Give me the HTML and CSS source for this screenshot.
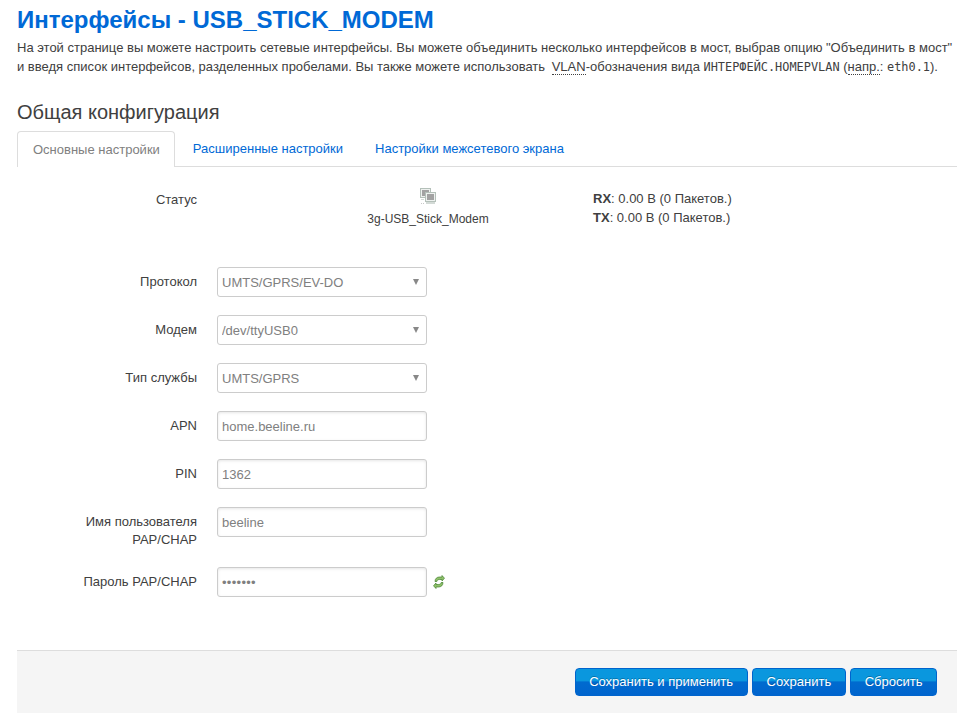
FILE: index.html
```html
<!DOCTYPE html>
<html lang="ru">
<head>
<meta charset="utf-8">
<title>Интерфейсы - USB_STICK_MODEM</title>
<link rel="stylesheet" href="styles.css">
</head>
<body>
<main class="page">
  <h2 class="title">Интерфейсы - USB_STICK_MODEM</h2>
  <p class="intro">На этой странице вы можете настроить сетевые интерфейсы. Вы можете объединить несколько интерфейсов в мост, выбрав опцию "Объединить в мост"<br>и введя список интерфейсов, разделенных пробелами. Вы также можете использовать <abbr class="abbr-vlan">VLAN</abbr>-обозначения вида <code>ИНТЕРФЕЙС.НОМЕРVLAN</code> (<abbr>напр.</abbr>: <code>eth0.1</code>).</p>
  <h3 class="section">Общая конфигурация</h3>
  <nav class="tabs">
    <a class="tab active">Основные настройки</a>
    <a class="tab">Расширенные настройки</a>
    <a class="tab">Настройки межсетевого экрана</a>
  </nav>
  <form class="form">
    <div class="row status-row">
      <div class="label">Статус</div>
      <div class="status-device">
        <svg class="net-icon" width="16" height="17" viewBox="0 0 16 17">
          <rect x="0.5" y="0.5" width="10" height="9" fill="#eef1ef" stroke="#b4c0b9"/>
          <rect x="2" y="2" width="7" height="6" fill="#a2a2a2"/>
          <rect x="5.5" y="4.5" width="10" height="9" fill="#eef1ef" stroke="#b4c0b9"/>
          <rect x="7" y="6" width="7" height="6" fill="#a2a2a2"/>
          <rect x="6" y="14" width="9" height="2" fill="#d3dad6"/>
          <rect x="1" y="11" width="3" height="1" fill="#d3dad6"/>
          <rect x="1" y="15" width="1" height="1" fill="#c8c8c8"/>
          <rect x="3" y="15" width="1" height="1" fill="#c8c8c8"/>
        </svg>
        <span class="device-name">3g-USB_Stick_Modem</span>
      </div>
      <div class="status-stats">
        <div><b>RX</b>: 0.00 B (0 Пакетов.)</div>
        <div><b>TX</b>: 0.00 B (0 Пакетов.)</div>
      </div>
    </div>
    <div class="row">
      <label class="label">Протокол</label>
      <div class="select-wrap"><select class="field"><option>UMTS/GPRS/EV-DO</option></select></div>
    </div>
    <div class="row">
      <label class="label">Модем</label>
      <div class="select-wrap"><select class="field"><option>/dev/ttyUSB0</option></select></div>
    </div>
    <div class="row">
      <label class="label">Тип службы</label>
      <div class="select-wrap"><select class="field"><option>UMTS/GPRS</option></select></div>
    </div>
    <div class="row">
      <label class="label">APN</label>
      <input class="field" type="text" value="home.beeline.ru">
    </div>
    <div class="row">
      <label class="label">PIN</label>
      <input class="field" type="text" value="1362">
    </div>
    <div class="row row-tall">
      <label class="label">Имя пользователя PAP/CHAP</label>
      <input class="field" type="text" value="beeline">
    </div>
    <div class="row">
      <label class="label">Пароль PAP/CHAP</label>
      <input class="field field-secret" type="password" value="1234567">
      <svg class="reveal" width="12" height="14" viewBox="0 0 12 14">
        <path d="M2 6.5C2 3.5 4 2 6.5 2H9V0.5L11.5 3.2 9 6V4.5H6.5C5 4.5 4 5.2 3.8 6.5Z" fill="#8fc06a" stroke="#3f7f2a" stroke-width="0.7"/>
        <path d="M10 7.5C10 10.5 8 12 5.5 12H3V13.5L0.5 10.8 3 8V9.5H5.5C7 9.5 8 8.8 8.2 7.5Z" fill="#8fc06a" stroke="#3f7f2a" stroke-width="0.7"/>
      </svg>
    </div>
    <div class="actions">
      <button class="btn btn-trim" type="button">Сохранить и применить</button>
      <button class="btn" type="button">Сохранить</button>
      <button class="btn btn-trim" type="button">Сбросить</button>
    </div>
  </form>
</main>
</body>
</html>
```
FILE: styles.css
```css
html, body { margin: 0; padding: 0; background: #fff; }
body {
  font-family: "Liberation Sans", Arial, sans-serif;
  font-size: 13px;
  line-height: 18px;
  color: #404040;
  overflow: hidden;
}
.page { width: 940px; margin-left: 17px; }
.title {
  margin: 0;
  padding-top: 5px;
  font-size: 24px;
  line-height: 30px;
  font-weight: bold;
  color: #0069d6;
}
.intro { margin: 3px 0 0; line-height: 19px; white-space: nowrap; }
abbr { border-bottom: 1px dotted #404040; }
.abbr-vlan { margin-left: 3px; }
code { font-family: "DejaVu Sans Mono", monospace; font-size: 11.9px; }
.section {
  margin: 20px 0 0;
  font-size: 20px;
  line-height: 30px;
  font-weight: normal;
}
.tabs {
  display: flex;
  height: 35px;
  margin-top: 4px;
  border-bottom: 1px solid #ddd;
}
.tab {
  padding: 0 15px;
  height: 35px;
  line-height: 35px;
  margin-right: 2px;
  color: #0069d6;
}
.tab.active {
  padding-right: 14px;
  margin-right: 3px;
  color: #808080;
  background: #fff;
  border: 1px solid #ddd;
  border-bottom: 0;
  border-radius: 4px 4px 0 0;
}
.form { padding-top: 20px; }
.row {
  display: flex;
  align-items: flex-start;
  margin-bottom: 18px;
  height: 30px;
}
.row-tall { height: 42px; }
.label {
  width: 160px;
  padding: 6px 0 0 20px;
  text-align: right;
  flex: none;
}
.status-row { height: 60px; margin-bottom: 20px; }
.status-row .label { padding-top: 4px; }
.status-device {
  display: flex;
  flex-direction: column;
  align-items: center;
  width: 422px;
  margin-left: 20px;
  flex: none;
  font-size: 12px;
  padding-top: 1px;
}
.net-icon { display: block; margin-bottom: 5px; }
.device-name { line-height: 18px; }
.status-stats { margin-left: -46px; line-height: 19px; padding-top: 2px; }
.field {
  width: 210px;
  height: 30px;
  margin-left: 20px;
  padding: 0 4px;
  box-sizing: border-box;
  font-family: inherit;
  font-size: 13px;
  color: #808080;
  background: #fff;
  border: 1px solid #ccc;
  border-radius: 3px;
  box-shadow: inset 0 1px 3px rgba(0,0,0,0.1);
  outline: 0;
}
.field-secret { letter-spacing: 0.3px; }
select.field {
  appearance: none;
  -webkit-appearance: none;
  box-shadow: none;
  margin-left: 0;
  display: block;
}
.select-wrap { position: relative; margin-left: 20px; }
.select-wrap::after {
  content: "";
  position: absolute;
  right: 8px;
  top: 12px;
  border-left: 3px solid transparent;
  border-right: 3px solid transparent;
  border-top: 6px solid #888;
}
.reveal { margin: 8px 0 0 6px; }
.actions {
  display: flex;
  justify-content: flex-end;
  gap: 4px;
  margin-top: 53px;
  padding: 17px 20px 17px 0;
  background: #f5f5f5;
  border-top: 1px solid #ddd;
}
.btn {
  height: 28px;
  padding: 0 14px 2px;
  font-family: inherit;
  font-size: 13px;
  color: #fff;
  text-shadow: 0 -1px 0 rgba(0,0,0,0.25);
  background: linear-gradient(#0a97de 0, #0a97de 45%, #006bcf 50%, #0064cd 100%);
  border: 1px solid #0064cd;
  border-radius: 4px;
}
.btn-trim { padding: 0 13.5px 2px; }
```
